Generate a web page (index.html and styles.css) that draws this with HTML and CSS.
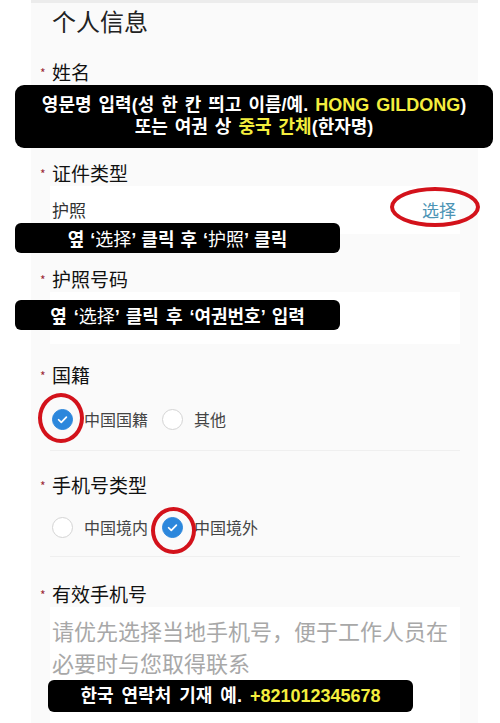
FILE: index.html
```html
<!DOCTYPE html>
<html lang="zh">
<head>
  <meta charset="UTF-8" />
  <meta name="viewport" content="width=device-width, initial-scale=1.0"/>
  <title>个人信息</title>
  <link rel="stylesheet" href="styles.css">
</head>
<body>

  <div class="screen">
    <div class="prev-card"></div>

    <!-- FORM CARD -->
    <div class="card">
      <h2 class="title">个人信息</h2>

      <div class="label label-name"><span class="req">*</span>姓名</div>
      <div class="input input-name"></div>

      <div class="label label-type"><span class="req">*</span>证件类型</div>
      <div class="input select-row">
        <span class="value">护照</span>
        <span class="pick">选择</span>
      </div>

      <div class="label label-passport"><span class="req">*</span>护照号码</div>
      <div class="input input-passport"></div>

      <div class="label label-nation"><span class="req">*</span>国籍</div>
      <div class="radio-row radio-nation">
        <div class="radio"><span class="dot on"><svg viewBox="0 0 22 22"><path d="M6.5 11.3l3.1 3.1 5.9-6.2" /></svg></span>中国国籍</div>
        <div class="radio"><span class="dot"></span>其他</div>
      </div>

      <div class="label label-mobile-type"><span class="req">*</span>手机号类型</div>
      <div class="radio-row radio-mobile">
        <div class="radio"><span class="dot"></span>中国境内</div>
        <div class="radio"><span class="dot on"><svg viewBox="0 0 22 22"><path d="M6.5 11.3l3.1 3.1 5.9-6.2" /></svg></span>中国境外</div>
      </div>

      <div class="label label-phone"><span class="req">*</span>有效手机号</div>
      <div class="input textarea">请优先选择当地手机号，便于工作人员在必要时与您取得联系</div>
    </div>

    <!-- ANNOTATIONS ON TOP -->
    <div class="note note-name">
      <div>영문명 입력(성 한 칸 띄고 이름/예. <span class="hl">HONG GILDONG</span>)</div>
      <div>또는 여권 상 <span class="hl">중국 간체</span>(한자명)</div>
    </div>
    <div class="note note-type">옆 ‘<span class="zh">选择</span>’ 클릭 후 ‘<span class="zh">护照</span>’ 클릭</div>
    <div class="note note-passport">옆 ‘<span class="zh">选择</span>’ 클릭 후 ‘여권번호’ 입력</div>
    <div class="note note-phone">한국 연락처 기재 예. <span class="hl">+821012345678</span></div>

    <div class="ring ring-select"></div>
    <div class="ring ring-nation"></div>
    <div class="ring ring-abroad"></div>
  </div>

</body>
</html>
```

FILE: styles.css
```css
body {
  margin: 0;
  background-color: #ffffff;
  font-family: "Noto Sans CJK SC", "Noto Sans", sans-serif;
  color: #222;
}

.screen {
  position: relative;
  width: 500px;
  height: 723px;
  overflow: hidden;
}

.prev-card {
  height: 3px;
  margin: 0 22px 0 31px;
  background-color: #ececec;
}

.card {
  margin: 0 22px 0 31px;
  padding: 0 18px 0 19px;
  height: 720px;
  background-color: #fafafa;
}

.title {
  margin: 0;
  padding: 1px 0 0 2px;
  font-size: 24px;
  font-weight: 400;
  line-height: 34px;
  color: #222;
}

.label {
  display: flex;
  align-items: center;
  height: 28px;
  margin-left: -10px;
  font-size: 19px;
  color: #111;
}

.req {
  width: 12px;
  padding-top: 3px;
  font-size: 12px;
  line-height: 28px;
  color: #9a2b36;
}

.label-name { margin-top: 19px; }
.label-type { margin-top: 12px; }
.label-passport { margin-top: 30px; }
.label-nation { margin-top: 16px; }
.label-mobile-type { margin-top: 19px; }
.label-phone { margin-top: 22px; }

.input {
  background-color: #ffffff;
}

.input-name {
  height: 60px;
  margin-top: 1px;
}

.select-row {
  display: flex;
  justify-content: space-between;
  align-items: center;
  height: 46px;
  padding: 0 4px 2px 2px;
  font-size: 17px;
}

.select-row .value {
  color: #333;
}

.select-row .pick {
  color: #4d94b5;
}

.input-passport {
  height: 52px;
}

.radio-row {
  display: flex;
  align-items: center;
  gap: 14px;
  padding-left: 2px;
  border-bottom: 1px solid #efefef;
}

.radio-nation { height: 62px; }
.radio-mobile { height: 58px; }

.radio {
  display: flex;
  align-items: center;
  gap: 11px;
  font-size: 16px;
  color: #444;
}

.dot {
  display: flex;
  width: 21px;
  height: 21px;
  box-sizing: border-box;
  border: 1px solid #d4d4d4;
  border-radius: 50%;
  background-color: #fff;
}

.dot.on {
  background-color: #2c87dc;
  border-color: #2c87dc;
}

.dot svg {
  width: 100%;
  height: 100%;
}

.dot svg path {
  fill: none;
  stroke: #fff;
  stroke-width: 2;
  stroke-linecap: round;
  stroke-linejoin: round;
}

.textarea {
  height: 120px;
  padding: 7px 4px 0 2px;
  font-size: 22px;
  line-height: 32px;
  color: #a8a8a8;
}

/* black annotation boxes */
.note {
  position: absolute;
  box-sizing: border-box;
  background-color: #000;
  color: #fff;
  font-family: "Liberation Sans", "Noto Sans CJK KR", sans-serif;
  font-weight: 700;
  font-size: 18px;
  text-align: center;
  border-radius: 6px;
  white-space: nowrap;
}

.note .hl {
  color: #f4ee3e;
}

.note .zh {
  font-family: "Noto Sans CJK SC", sans-serif;
  font-weight: 400;
}

.note-name {
  left: 15px;
  top: 85px;
  width: 478px;
  height: 63px;
  padding-top: 9px;
  line-height: 22px;
  word-spacing: 2px;
  border-radius: 9px;
}

.note-type {
  left: 15px;
  top: 223px;
  width: 325px;
  height: 30px;
  line-height: 30px;
  word-spacing: 1px;
}

.note-passport {
  left: 15px;
  top: 300px;
  width: 325px;
  height: 30px;
  line-height: 30px;
  word-spacing: 2px;
}

.note-phone {
  left: 48px;
  top: 680px;
  width: 365px;
  height: 32px;
  line-height: 32px;
  word-spacing: 3px;
}

/* red marker rings */
.ring {
  position: absolute;
  box-sizing: border-box;
  border: 4px solid #d3121b;
  border-radius: 50%;
}

.ring-select {
  left: 390px;
  top: 187px;
  width: 90px;
  height: 40px;
}

.ring-nation {
  left: 38px;
  top: 393px;
  width: 46px;
  height: 50px;
}

.ring-abroad {
  left: 151px;
  top: 507px;
  width: 45px;
  height: 47px;
}
```
